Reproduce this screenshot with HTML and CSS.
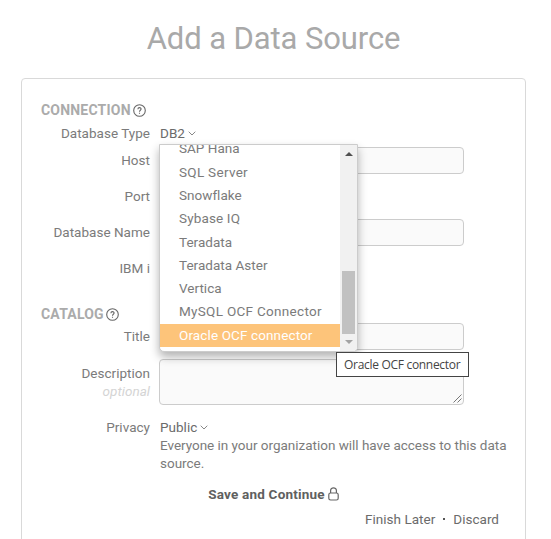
FILE: index.html
```html
<!DOCTYPE html>
<html lang="en">
<head>
<meta charset="utf-8">
<title>Add a Data Source</title>
<link rel="stylesheet" href="styles.css">
</head>
<body>
<h1>Add a Data Source</h1>
<main class="card">
  <h2><span>CONNECTION</span><svg class="help" viewBox="0 0 13 13"><circle cx="6.5" cy="6.5" r="5.8"/><path d="M4.9 5.2C4.9 3.1 8.1 3.1 8.1 5.1C8.1 6.3 6.5 6.3 6.5 7.7M6.5 8.7V9.8"/></svg></h2>
  <div class="row type">
    <label>Database Type</label>
    <div class="choice"><span>DB2</span><svg class="chev" viewBox="0 0 8 5"><path d="M.7 .7L4 4L7.3 .7"/></svg>
      <div class="menu">
        <ul>
          <li>SAP Hana</li>
          <li class="wide">SQL Server</li>
          <li>Snowflake</li>
          <li class="mid">Sybase IQ</li>
          <li>Teradata</li>
          <li>Teradata Aster</li>
          <li>Vertica</li>
          <li class="wide">MySQL OCF Connector</li>
          <li class="active">Oracle OCF connector</li>
        </ul>
        <div class="scroll"><i class="up"></i><i class="thumb"></i><i class="down"></i></div>
      </div>
      <div class="tip">Oracle OCF connector</div>
    </div>
  </div>
  <div class="row"><label>Host</label><div class="input"></div></div>
  <div class="row"><label>Port</label><div class="input short"></div></div>
  <div class="row"><label>Database Name</label><div class="input"></div></div>
  <div class="row"><label>IBM i</label><div class="check"></div></div>
  <h2 class="catalog"><span>CATALOG</span><svg class="help" viewBox="0 0 13 13"><circle cx="6.5" cy="6.5" r="5.8"/><path d="M4.9 5.2C4.9 3.1 8.1 3.1 8.1 5.1C8.1 6.3 6.5 6.3 6.5 7.7M6.5 8.7V9.8"/></svg></h2>
  <div class="row"><label>Title</label><div class="input"></div></div>
  <div class="row desc"><label>Description<em>optional</em></label><div class="input area"><svg viewBox="0 0 9 9"><path d="M.5 8.5L8.5 .5M4.5 8.5L8.5 4.5"/></svg></div></div>
  <div class="row privacy"><label>Privacy</label>
    <div><div class="choice pub"><span>Public</span><svg class="chev" viewBox="0 0 8 5"><path d="M.7 .7L4 4L7.3 .7"/></svg></div><p>Everyone in your organization will have access to this data source.</p></div>
  </div>
  <div class="save"><b>Save and Continue</b><svg viewBox="0 0 11 14"><rect x=".8" y="6" width="9.4" height="7" rx="1.8"/><path d="M2.6 6V3.6C2.6 -.1 8.4 -.1 8.4 3.6V6"/></svg></div>
  <div class="links"><span>Finish Later</span><i></i><span>Discard</span></div>
</main>
</body>
</html>
```
FILE: styles.css
```css
* { box-sizing: border-box; }
html, body { height: 539px; overflow: hidden; }
body { margin: 0; background: #fff; color: #7b7b7b; font: 13.5px/18px Roboto, "Liberation Sans", sans-serif; letter-spacing: .02px; }
h1 { margin: 0; height: 78px; line-height: 78px; text-align: center; font-size: 31px; font-weight: 400; letter-spacing: -.1px; color: #a9a9a9; padding-right: 4px; }
.card { margin: 0 25px 0 21px; height: 480px; padding: 22px 18px 0 0; border: 1px solid #d9d9d9; border-radius: 4px; }
h2 { display: flex; align-items: center; gap: 2px; margin: 0 0 0 19px; height: 19px; font-size: 14px; line-height: 19px; color: #ababab; font-weight: 700; letter-spacing: .2px; }
.catalog { margin-top: 23px; height: 18px; }
.help { width: 13px; height: 13px; fill: none; stroke: #666; stroke-width: 1.1; }
.row { display: grid; grid-template-columns: 128px 305px; column-gap: 9px; height: 27px; margin-bottom: 9px; }
.row label { text-align: right; line-height: 27px; }
.type { margin-bottom: 0; }
.type .choice { padding-bottom: 2px; }
.choice { position: relative; display: flex; align-items: center; gap: 3px; padding-left: 1px; color: #6b6b6b; }
.chev { width: 8px; height: 5px; margin-top: 1px; fill: none; stroke: #888; }
.input { border: 1px solid #ccc; border-radius: 4px; background: #fafafa; }
.short { width: 80px; }
.check { width: 12px; height: 12px; margin-top: 7px; border: 1px solid #666; border-radius: 2px; }
.menu { position: absolute; z-index: 2; top: 24px; left: 0; width: 199px; height: 208px; display: flex; overflow: hidden; border: 1px solid #ccc; border-radius: 0 0 5px 5px; background: #fff; box-shadow: 0 5px 10px rgba(0, 0, 0, .3); }
.menu ul { flex: 1; display: flex; flex-direction: column; justify-content: flex-end; list-style: none; margin: 0; padding: 0 0 4px; color: #7b7b7b; }
.menu li { flex: none; height: 23.3px; padding-left: 19px; line-height: 23.8px; white-space: nowrap; }
.menu .mid { letter-spacing: .15px; }
.menu .wide { letter-spacing: .3px; }
.menu .active { background: #fdc47a; color: #fff; letter-spacing: .12px; }
.scroll { width: 17px; display: flex; flex-direction: column; align-items: center; background: #f1f1f1; }
.scroll i { flex: none; }
.up { margin-top: 7px; border: 4px solid transparent; border-top: 0; border-bottom-color: #505050; }
.thumb { width: 13px; height: 63px; margin-top: 115px; background: #c1c1c1; }
.down { margin-top: 6px; border: 4px solid transparent; border-bottom: 0; border-top-color: #a3a3a3; }
.tip { position: absolute; z-index: 3; top: 232px; left: 177px; width: 133px; height: 25px; padding-left: 7px; border: 1px solid #444; background: #fff; color: #444; font: 12px/23px "Open Sans", sans-serif; letter-spacing: -.3px; white-space: nowrap; }
.desc { height: 46px; margin-bottom: 13px; }
.desc label { padding-top: 5px; line-height: 18px; }
.desc em { display: block; color: #d4d4d4; }
.area { display: flex; align-items: flex-end; justify-content: flex-end; padding: 0 1px 1px; }
.area svg { width: 9px; height: 9px; fill: none; stroke: #555; stroke-width: .8; }
.privacy { grid-template-columns: 128px 1fr; height: 54px; margin: 0; }
.privacy label { line-height: 18px; }
.pub { height: 18px; }
p { margin: 0 0 0 1px; letter-spacing: -.02px; }
.save { display: flex; align-items: center; justify-content: center; gap: 3px; height: 18px; margin: 13px 0 0 18px; color: #606060; letter-spacing: .2px; }
.save svg { width: 11px; height: 14px; fill: none; stroke: #666; stroke-width: 1.2; }
.links { display: flex; align-items: center; justify-content: flex-end; gap: 8px; height: 18px; margin: 7px 8px 0 0; color: #6b6b6b; }
.links i { width: 2px; height: 2px; background: #555; }
```
